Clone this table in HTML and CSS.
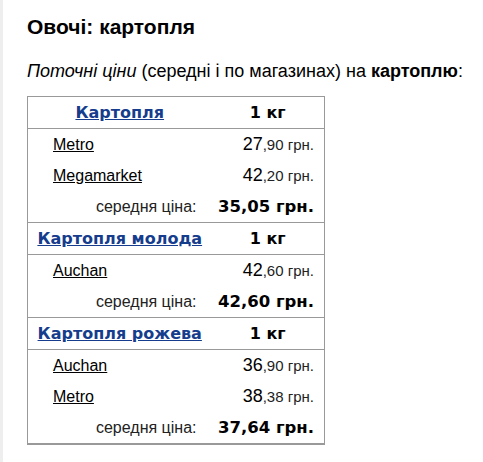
FILE: index.html
```html
<!DOCTYPE html>
<html lang="uk">
<head>
<meta charset="utf-8">
<title>Овочі: картопля</title>
<link rel="stylesheet" href="styles.css">
</head>
<body>
<div class="page">
  <h1 class="title">Овочі: картопля</h1>
  <p class="intro"><em>Поточні ціни</em> (середні і по магазинах) на <strong>картоплю</strong>:</p>
  <table class="prices">
    <colgroup><col class="c-name"><col class="c-val"></colgroup>
    <tr class="head"><th class="name"><a href="#">Картопля</a></th><th class="unit">1 кг</th></tr>
    <tr class="shop"><td class="store"><a href="#">Metro</a></td><td class="price"><span class="int">27</span>,90 грн.</td></tr>
    <tr class="shop"><td class="store"><a href="#">Megamarket</a></td><td class="price"><span class="int">42</span>,20 грн.</td></tr>
    <tr class="avg"><td class="avg-label">середня ціна:</td><td class="avg-val">35,05 грн.</td></tr>

    <tr class="head"><th class="name"><a href="#">Картопля молода</a></th><th class="unit">1 кг</th></tr>
    <tr class="shop"><td class="store"><a href="#">Auchan</a></td><td class="price"><span class="int">42</span>,60 грн.</td></tr>
    <tr class="avg"><td class="avg-label">середня ціна:</td><td class="avg-val">42,60 грн.</td></tr>

    <tr class="head"><th class="name"><a href="#">Картопля рожева</a></th><th class="unit">1 кг</th></tr>
    <tr class="shop"><td class="store"><a href="#">Auchan</a></td><td class="price"><span class="int">36</span>,90 грн.</td></tr>
    <tr class="shop"><td class="store"><a href="#">Metro</a></td><td class="price"><span class="int">38</span>,38 грн.</td></tr>
    <tr class="avg"><td class="avg-label">середня ціна:</td><td class="avg-val">37,64 грн.</td></tr>
  </table>
</div>
</body>
</html>
```
FILE: styles.css
```css
html, body {
  margin: 0;
  padding: 0;
  background: #fff;
}
body {
  font-family: "Liberation Sans", Arial, sans-serif;
  color: #000;
  border-left: 3px solid #eeeeee;
  min-height: 462px;
  box-sizing: border-box;
}
.page {
  padding: 14px 0 0 24px;
}
.title {
  font-size: 21px;
  font-weight: bold;
  margin: 0;
  line-height: 26px;
}
.intro {
  font-size: 18px;
  margin: 20px 0 0 0;
  line-height: 22px;
}
.prices {
  margin-top: 14px;
  border-collapse: collapse;
  width: 298px;
  border: 1px solid #999;
  border-bottom: 2px solid #999;
  table-layout: fixed;
}
.c-name { width: 184px; }
.prices th, .prices td {
  padding: 0;
  height: 31px;
  line-height: 20px;
}
.head th {
  border-top: 1px solid #999;
  border-bottom: 1px solid #999;
  font-family: "DejaVu Sans", Verdana, sans-serif;
  font-weight: bold;
  font-size: 16px;
  text-align: center;
}
.head .name a {
  color: #163d8d;
  text-decoration: underline;
}
.head .unit {
  color: #000;
}
.store {
  padding-left: 25px !important;
  font-size: 16px;
}
.store a {
  color: #000;
  text-decoration: underline;
}
.price {
  text-align: right;
  padding-right: 10px !important;
  font-size: 15px;
  color: #222;
}
.price .int {
  font-size: 18px;
  color: #000;
}
.avg-label {
  text-align: right;
  padding-right: 15px !important;
  font-size: 16px;
  color: #222;
}
.avg-val {
  text-align: right;
  padding-right: 10px !important;
  font-family: "DejaVu Sans", Verdana, sans-serif;
  font-weight: bold;
  font-size: 16.5px;
}
```
